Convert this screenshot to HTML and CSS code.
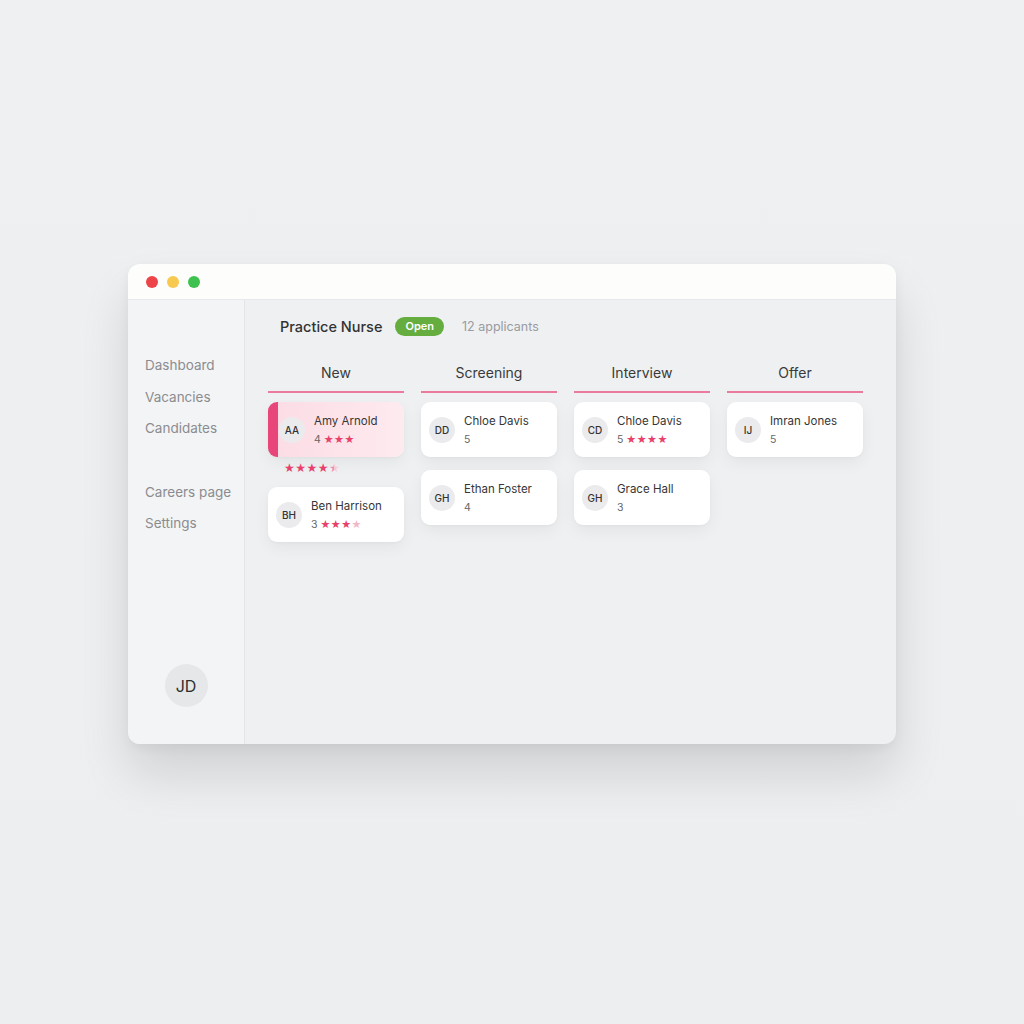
FILE: index.html
```html
<!DOCTYPE html>
<html lang="en">

<head>
    <meta charset="UTF-8">
    <meta name="viewport" content="width=device-width, initial-scale=1.0">
    <title>Practice Nurse - Pipeline</title>
    <link rel="stylesheet" href="styles.css">
</head>

<body>

    <div class="window">
        <div class="titlebar">
            <span class="dot red"></span>
            <span class="dot yellow"></span>
            <span class="dot green"></span>
        </div>

        <div class="app">
            <aside class="sidebar">
                <nav class="nav">
                    <a>Dashboard</a>
                    <a>Vacancies</a>
                    <a>Candidates</a>
                    <a class="nav-gap">Careers page</a>
                    <a>Settings</a>
                </nav>
                <div class="user">JD</div>
            </aside>

            <main class="main">
                <header class="job">
                    <h1>Practice Nurse</h1>
                    <span class="status">Open</span>
                    <span class="count">12 applicants</span>
                </header>

                <div class="board">
                    <section class="column">
                        <h2>New</h2>
                        <div class="stack">
                            <div class="amy-group">
                                <div class="card active">
                                    <span class="avatar">AA</span>
                                    <div class="info">
                                        <div class="name">Amy Arnold</div>
                                        <div class="meta">4 <span class="stars">★★★</span></div>
                                    </div>
                                </div>
                                <div class="stars loose">★★★★<span class="half">★</span></div>
                            </div>
                            <div class="card">
                                <span class="avatar">BH</span>
                                <div class="info">
                                    <div class="name">Ben Harrison</div>
                                    <div class="meta">3 <span class="stars">★★★<span class="faded">★</span></span></div>
                                </div>
                            </div>
                        </div>
                    </section>

                    <section class="column">
                        <h2>Screening</h2>
                        <div class="stack">
                            <div class="card">
                                <span class="avatar">DD</span>
                                <div class="info">
                                    <div class="name">Chloe Davis</div>
                                    <div class="meta">5</div>
                                </div>
                            </div>
                            <div class="card">
                                <span class="avatar">GH</span>
                                <div class="info">
                                    <div class="name">Ethan Foster</div>
                                    <div class="meta">4</div>
                                </div>
                            </div>
                        </div>
                    </section>

                    <section class="column">
                        <h2>Interview</h2>
                        <div class="stack">
                            <div class="card">
                                <span class="avatar">CD</span>
                                <div class="info">
                                    <div class="name">Chloe Davis</div>
                                    <div class="meta">5 <span class="stars">★★★★</span></div>
                                </div>
                            </div>
                            <div class="card">
                                <span class="avatar">GH</span>
                                <div class="info">
                                    <div class="name">Grace Hall</div>
                                    <div class="meta">3</div>
                                </div>
                            </div>
                        </div>
                    </section>

                    <section class="column">
                        <h2>Offer</h2>
                        <div class="stack">
                            <div class="card">
                                <span class="avatar">IJ</span>
                                <div class="info">
                                    <div class="name">Imran Jones</div>
                                    <div class="meta">5</div>
                                </div>
                            </div>
                        </div>
                    </section>
                </div>
            </main>
        </div>
    </div>

</body>

</html>
```

FILE: styles.css
```css
/* General */
* {
    margin: 0;
    padding: 0;
    box-sizing: border-box;
}

body {
    width: 1024px;
    height: 1024px;
    overflow: hidden;
    padding: 264px 128px 0;
    background: linear-gradient(180deg, #eff0f2 0%, #eceef0 100%);
    font-family: Inter, "Noto Sans", sans-serif;
    color: #333;
}

/* Window */
.window {
    width: 768px;
    height: 480px;
    display: flex;
    flex-direction: column;
    border-radius: 12px;
    overflow: hidden;
    background: #eef0f2;
    box-shadow: 0 30px 50px rgba(0, 0, 0, 0.12), 0 4px 12px rgba(0, 0, 0, 0.05);
}

.titlebar {
    height: 36px;
    display: flex;
    align-items: center;
    gap: 9px;
    padding-left: 18px;
    background: #fdfdfb;
    border-bottom: 1px solid #e8e9eb;
}

.dot {
    width: 12px;
    height: 12px;
    border-radius: 50%;
}

.dot.red { background: #ec4448; }
.dot.yellow { background: #f7c94e; }
.dot.green { background: #3ec14f; }

.app {
    flex: 1;
    display: grid;
    grid-template-columns: 117px 1fr;
}

/* Sidebar */
.sidebar {
    display: flex;
    flex-direction: column;
    align-items: center;
    padding: 50px 0 37px;
    background: #f3f4f5;
    border-right: 1px solid #e4e5e8;
}

.nav {
    align-self: stretch;
    display: flex;
    flex-direction: column;
    padding-left: 17px;
}

.nav a {
    font-size: 13.5px;
    line-height: 31.5px;
    color: #8b8c90;
}

.nav .nav-gap {
    margin-top: 32px;
}

.user {
    margin-top: auto;
    width: 43px;
    height: 43px;
    border-radius: 50%;
    background: #e6e7e9;
    display: flex;
    align-items: center;
    justify-content: center;
    font-size: 16px;
    color: #2f2f2f;
}

/* Main */
.main {
    padding: 16px 0 0 23px;
}

.job {
    display: flex;
    align-items: center;
    height: 20px;
    padding-left: 12px;
}

.job h1 {
    font-size: 14.5px;
    font-weight: 500;
    color: #333;
}

.status {
    margin-left: 13px;
    padding: 0 10px;
    height: 19px;
    line-height: 19px;
    border-radius: 10px;
    background: #64ad3e;
    color: #fff;
    font-size: 11px;
    font-weight: 600;
}

.count {
    margin-left: 18px;
    font-size: 12.5px;
    color: #9a9b9f;
}

/* Board */
.board {
    display: grid;
    grid-template-columns: repeat(4, 136px);
    gap: 17px;
    margin-top: 27px;
}

.column h2 {
    font-size: 14px;
    font-weight: 400;
    color: #3a3a3a;
    text-align: center;
    line-height: 20px;
    padding-bottom: 8px;
    border-bottom: 2px solid #eb7b9c;
}

.stack {
    display: flex;
    flex-direction: column;
    gap: 13px;
    margin-top: 9px;
}

.card {
    height: 55px;
    display: flex;
    align-items: center;
    gap: 9px;
    padding-left: 8px;
    border-radius: 9px;
    background: #fff;
    box-shadow: 0 6px 16px rgba(0, 0, 0, 0.05), 0 1px 3px rgba(0, 0, 0, 0.03);
}

.card.active {
    background: linear-gradient(90deg, #fcdde5 0%, #fde6ec 70%, #fdebf0 100%);
    border-left: 10px solid #e8457a;
}

.card.active .avatar {
    margin-left: -7px;
}

.avatar {
    flex: none;
    width: 26px;
    height: 26px;
    border-radius: 50%;
    background: #ebebed;
    display: flex;
    align-items: center;
    justify-content: center;
    font-size: 10px;
    font-weight: 500;
    color: #333;
}

.info {
    display: flex;
    flex-direction: column;
    gap: 4px;
    margin-top: 2px;
}

.name {
    font-size: 11.5px;
    line-height: 15px;
    color: #363636;
}

.meta {
    font-size: 10.5px;
    line-height: 14px;
    color: #666;
}

.stars {
    color: #e8406a;
    font-family: "DejaVu Sans", sans-serif;
    font-size: 11px;
    letter-spacing: 0.5px;
}

.stars .faded {
    color: #f2b7c7;
}

.stars .half {
    background: linear-gradient(90deg, #f08ca8 50%, #f7c9d6 50%);
    -webkit-background-clip: text;
    background-clip: text;
    color: transparent;
}

.stars.loose {
    display: block;
    margin: 5px 0 0 16px;
    font-size: 12px;
    line-height: 12px;
    letter-spacing: 0.5px;
}
```
